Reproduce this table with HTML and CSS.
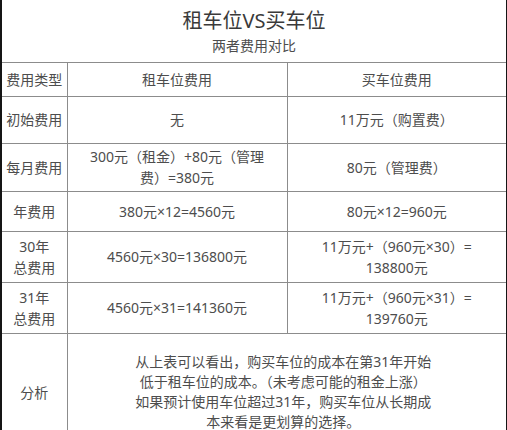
FILE: index.html
```html
<!DOCTYPE html>
<html lang="zh-CN">
<head>
<meta charset="utf-8">
<title>租车位VS买车位</title>
<link rel="stylesheet" href="styles.css">
</head>
<body>
<table class="cmp">
  <colgroup><col class="c1"><col class="c2"><col class="c3"></colgroup>
  <tr class="r-title">
    <td colspan="3">
      <div class="title">租车位VS买车位</div>
      <div class="sub">两者费用对比</div>
    </td>
  </tr>
  <tr class="r-head">
    <td>费用类型</td><td>租车位费用</td><td>买车位费用</td>
  </tr>
  <tr class="r-init">
    <td>初始费用</td><td>无</td><td>11万元（购置费）</td>
  </tr>
  <tr class="r-month">
    <td>每月费用</td><td class="pad">300元（租金）+80元（管理费）=380元</td><td>80元（管理费）</td>
  </tr>
  <tr class="r-year">
    <td>年费用</td><td>380元×12=4560元</td><td>80元×12=960元</td>
  </tr>
  <tr class="r-total">
    <td>30年<br>总费用</td><td>4560元×30=136800元</td><td class="pad">11万元+（960元×30）=<br>138800元</td>
  </tr>
  <tr class="r-total">
    <td>31年<br>总费用</td><td>4560元×31=141360元</td><td class="pad">11万元+（960元×31）=<br>139760元</td>
  </tr>
  <tr class="r-anal">
    <td>分析</td>
    <td colspan="2" class="anal"><p>从上表可以看出，购买车位的成本在第31年开始低于租车位的成本。（未考虑可能的租金上涨）<br>如果预计使用车位超过31年，购买车位从长期成本来看是更划算的选择。</p></td>
  </tr>
</table>
</body>
</html>
```

FILE: styles.css
```css
html, body {
  margin: 0;
  padding: 0;
  background: #fff;
}
body {
  font-family: "Noto Sans", "Noto Sans CJK SC", sans-serif;
  overflow: hidden;
}
.cmp {
  border-collapse: collapse;
  table-layout: fixed;
  width: 506px;
}
.c1 { width: 66px; }
.c2 { width: 220px; }
.c3 { width: 220px; }
.cmp td {
  border: 1px solid #8c8c8c;
  text-align: center;
  vertical-align: middle;
  padding: 0;
  font-size: 14px;
  line-height: 21px;
  color: #4d4d4d;
  box-sizing: border-box;
}
.cmp td:first-child { border-left: 2px solid #151515; }
.cmp td:last-child { border-right: 2px solid #151515; }
.cmp td.pad { padding: 0 16px; }
.r-title td {
  border-top: none;
  padding-top: 6px;
  height: 62px;
  vertical-align: top;
}
.title {
  font-size: 20px;
  line-height: 30px;
  color: #3a3a3a;
}
.sub {
  font-size: 14px;
  line-height: 20px;
  color: #4d4d4d;
}
.r-head td { height: 34px; }
.r-init td { height: 47px; }
.r-month td { height: 48px; }
.r-year td { height: 40px; }
.r-total td { height: 51px; }
.r-anal td { height: 118px; }
.anal { padding: 0 72px 0 65px !important; }
.anal p {
  margin: 0;
  line-height: 20px;
}
```
